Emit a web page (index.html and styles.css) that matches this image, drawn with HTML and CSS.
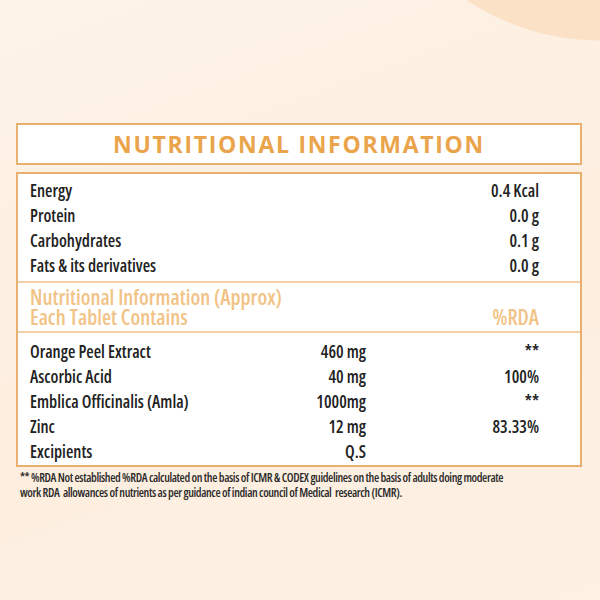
FILE: index.html
```html
<!DOCTYPE html>
<html>
<head>
<meta charset="utf-8">
<link rel="stylesheet" href="styles.css">
</head>
<body>
<div class="page">
  <div class="title-box"><h1 class="title">NUTRITIONAL INFORMATION</h1></div>
  <div class="table-box">
    <div class="rows rows-top">
      <div class="row"><span class="name">Energy</span><span class="mid"></span><span class="val">0.4 Kcal</span></div>
      <div class="row"><span class="name">Protein</span><span class="mid"></span><span class="val">0.0 g</span></div>
      <div class="row"><span class="name">Carbohydrates</span><span class="mid"></span><span class="val">0.1 g</span></div>
      <div class="row"><span class="name">Fats &amp; its derivatives</span><span class="mid"></span><span class="val">0.0 g</span></div>
    </div>
    <div class="rows rows-head">
      <div class="row head"><span class="name">Nutritional Information (Approx)</span><span class="mid"></span><span class="val"></span></div>
      <div class="row head"><span class="name">Each Tablet Contains</span><span class="mid"></span><span class="val">%RDA</span></div>
    </div>
    <div class="rows rows-bottom">
      <div class="row"><span class="name">Orange Peel Extract</span><span class="mid">460 mg</span><span class="val">**</span></div>
      <div class="row"><span class="name">Ascorbic Acid</span><span class="mid">40 mg</span><span class="val">100%</span></div>
      <div class="row"><span class="name">Emblica Officinalis (Amla)</span><span class="mid">1000mg</span><span class="val">**</span></div>
      <div class="row"><span class="name">Zinc</span><span class="mid">12 mg</span><span class="val">83.33%</span></div>
      <div class="row"><span class="name">Excipients</span><span class="mid">Q.S</span><span class="val"></span></div>
    </div>
  </div>
  <p class="note">** %RDA Not established %RDA calculated on the basis of ICMR &amp; CODEX guidelines on the basis of adults doing moderate work RDA&nbsp; allowances of nutrients as per guidance of indian council of Medical&nbsp; research (ICMR).</p>
</div>
</body>
</html>
```
FILE: styles.css
```css
html, body {
  margin: 0;
  padding: 0;
}
body {
  width: 600px;
  height: 600px;
  overflow: hidden;
  background:
    radial-gradient(circle at 600px -200px, #fbe2c6 0, #fbe2c6 240px, rgba(251,226,198,0) 241px),
    radial-gradient(circle at -260px 880px, #fbe3c8 0, #fbe3c8 330px, rgba(251,227,200,0) 331px),
    linear-gradient(160deg, #fdf3e8 0%, #fdeedf 55%, #fdf1e4 100%);
  font-family: "Open Sans", "DejaVu Sans Condensed", sans-serif;
  font-stretch: 75%;
}
.page {
  padding: 123px 18px 0 16px;
}
.title-box {
  height: 38px;
  border: 2px solid #e8b06f;
  background: #fff;
  display: flex;
  align-items: center;
  justify-content: center;
}
.title {
  margin: 0;
  font-family: "Open Sans", sans-serif;
  font-stretch: 100%;
  font-weight: 700;
  font-size: 23px;
  letter-spacing: 1.7px;
  color: #eaa44b;
  line-height: 1;
}
.table-box {
  margin-top: 7px;
  border: 2px solid #e8b06f;
  background: #fff;
  padding: 0 41px 0 12px;
}
.rows-top {
  padding: 4px 0 3px;
}
.rows-head {
  border-top: 2px solid #f2cfa4;
  margin: 0 -41px 0 -12px;
  padding: 4px 41px 4px 12px;
  border-bottom: 2px solid #f2cfa4;
}
.rows-bottom {
  padding: 6px 0 1px;
}
.row {
  display: grid;
  grid-template-columns: minmax(0, 1fr) 100px 173px;
  height: 25px;
  line-height: 25px;
  align-items: center;
  font-size: 17px;
  font-weight: 600;
  color: #222;
  white-space: nowrap;
}
.row .mid, .row .val {
  text-align: right;
}
.row.head {
  height: 20px;
  line-height: 20px;
  font-size: 21px;
  color: #f2c386;
}
.note {
  width: 488px;
  margin: 3px 0 0 4px;
  font-size: 12px;
  line-height: 15px;
  font-weight: 600;
  color: #2a2a2a;
  letter-spacing: -0.4px;
}
```
